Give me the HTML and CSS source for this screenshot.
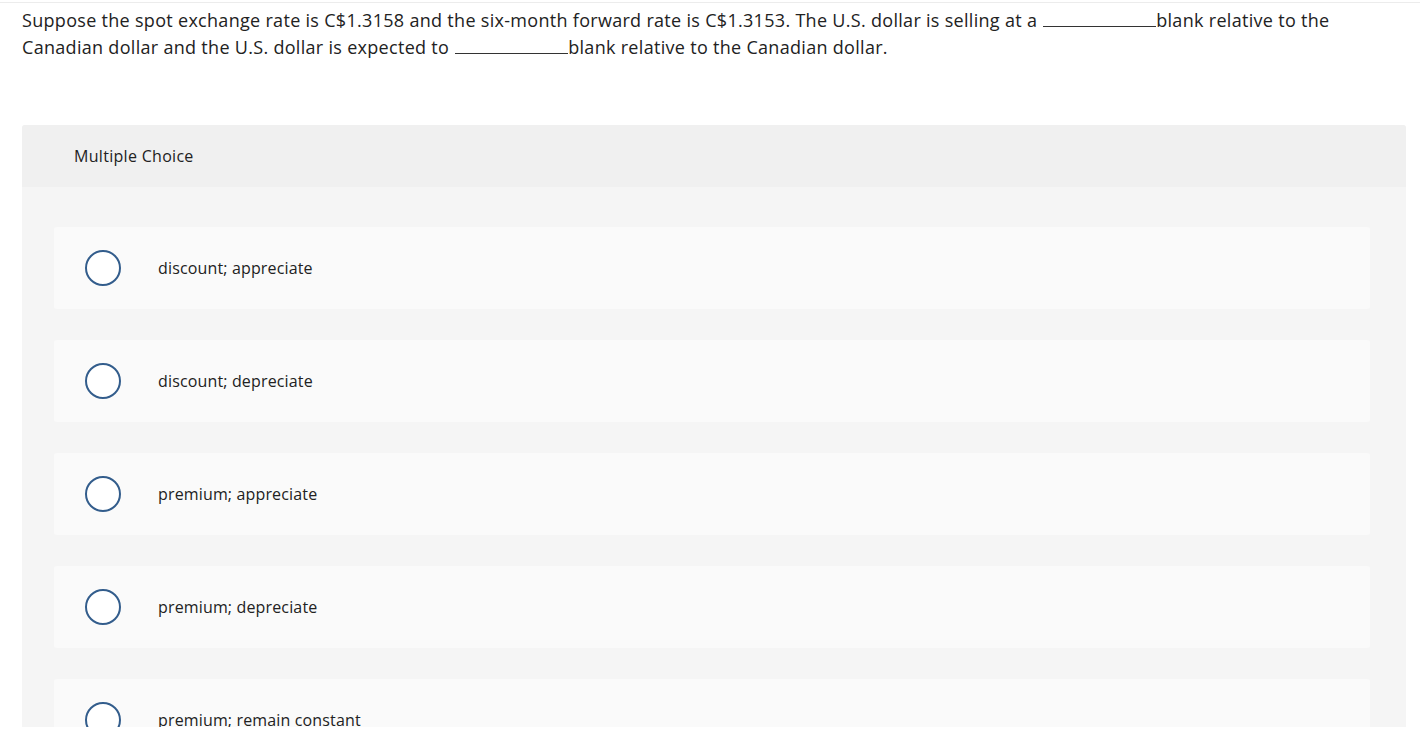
FILE: index.html
```html
<!DOCTYPE html>
<html>
<head>
<meta charset="utf-8">
<link rel="stylesheet" href="styles.css">
</head>
<body>
<div class="page">
  <div class="topline"></div>
  <p class="question">Suppose the spot exchange rate is C$1.3158 and the six-month forward rate is C$1.3153. The U.S. dollar is selling at a <span class="blank"></span>blank relative to the Canadian dollar and the U.S. dollar is expected to <span class="blank"></span>blank relative to the Canadian dollar.</p>
  <section class="panel">
    <div class="panel-head">Multiple Choice</div>
    <div class="panel-body">
      <label class="option"><span class="radio"></span><span class="opt-text">discount; appreciate</span></label>
      <label class="option"><span class="radio"></span><span class="opt-text">discount; depreciate</span></label>
      <label class="option"><span class="radio"></span><span class="opt-text">premium; appreciate</span></label>
      <label class="option"><span class="radio"></span><span class="opt-text">premium; depreciate</span></label>
      <label class="option"><span class="radio"></span><span class="opt-text">premium; remain constant</span></label>
    </div>
  </section>
</div>
</body>
</html>
```

FILE: styles.css
```css
* { box-sizing: border-box; }
html, body { margin: 0; padding: 0; background: #fff; }
body { font-family: "Open Sans", Lato, Arial, sans-serif; color: #222; }
.page { height: 727px; overflow: hidden; }
.topline { height: 1px; background: #ececec; margin-top: 2px; }
.question {
  margin: 0;
  padding: 4px 0 0 22px;
  width: 1360px;
  font-size: 18px;
  letter-spacing: 0.3px;
  line-height: 27px;
}
.blank {
  display: inline-block;
  width: 113px;
  border-bottom: 1px solid #333;
  height: 1px;
  vertical-align: baseline;
  margin-left: 1px;
}
.panel {
  margin: 64px 14px 0 22px;
  background: #f5f5f5;
  border-radius: 3px 3px 0 0;
}
.panel-head {
  background: #f0f0f0;
  height: 62px;
  padding-left: 52px;
  display: flex;
  align-items: center;
  font-size: 16px;
  letter-spacing: 0.3px;
  border-radius: 3px 3px 0 0;
}
.panel-body {
  padding: 40px 36px 40px 32px;
  display: flex;
  flex-direction: column;
  gap: 31px;
}
.option {
  background: #fafafa;
  height: 82px;
  border-radius: 3px;
  display: flex;
  align-items: center;
  padding-left: 31px;
}
.radio {
  width: 36px;
  height: 36px;
  border: 2px solid #335d8c;
  border-radius: 50%;
  background: #fff;
  flex: none;
}
.opt-text {
  margin-left: 37px;
  font-size: 16px;
  letter-spacing: 0.15px;
  color: #222;
}
```
